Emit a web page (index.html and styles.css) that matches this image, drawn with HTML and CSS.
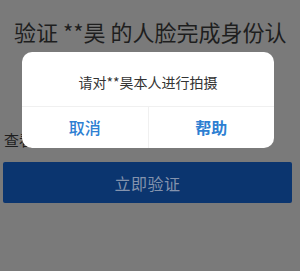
FILE: index.html
```html
<!DOCTYPE html>
<html lang="zh">
<head>
<meta charset="utf-8">
<link rel="stylesheet" href="styles.css">
</head>
<body>
<div class="page">
  <h1 class="title">验证 **昊 的人脸完成身份认</h1>
  <p class="link">查看相关协议</p>
  <button class="primary">立即验证</button>
</div>
<div class="mask">
  <div class="dialog">
    <div class="msg">请对**昊本人进行拍摄</div>
    <div class="actions">
      <div class="act">取消</div>
      <div class="act strong">帮助</div>
    </div>
  </div>
</div>
</body>
</html>
```

FILE: styles.css
```css
html, body {
  margin: 0;
  padding: 0;
  width: 300px;
  height: 271px;
  overflow: hidden;
  background: #7a7a7a;
  font-family: "Noto Sans CJK SC", "Noto Sans", sans-serif;
}
.page {
  display: flex;
  flex-direction: column;
  padding: 0 8px 0 3px;
}
.title {
  margin: 18px 0 0 11px;
  font-size: 22px;
  font-weight: 400;
  line-height: 26px;
  color: #1e1e1e;
  white-space: nowrap;
}
.link {
  margin: 88px 0 0 1px;
  font-size: 15px;
  line-height: 16px;
  color: #1e1e1e;
}
.primary {
  margin-top: 14px;
  height: 41px;
  border: none;
  border-radius: 2px;
  background: #0b356f;
  color: #8493ad;
  font-family: inherit;
  font-size: 16px;
  letter-spacing: 0.5px;
}
.mask {
  position: absolute;
  inset: 0;
}
.dialog {
  position: absolute;
  left: 22px;
  top: 52px;
  width: 252px;
  height: 96px;
  background: #fff;
  border-radius: 10px;
  display: flex;
  flex-direction: column;
}
.msg {
  height: 55px;
  display: flex;
  align-items: center;
  justify-content: center;
  font-size: 14px;
  color: #333;
  border-bottom: 1px solid #f0f0f0;
  box-sizing: border-box;
  padding-top: 5px;
}
.actions {
  flex: 1;
  display: flex;
}
.act {
  flex: 1;
  display: flex;
  align-items: center;
  justify-content: center;
  font-size: 16px;
  font-weight: 500;
  color: #2e7fd2;
  padding-bottom: 2px;
}
.act + .act {
  border-left: 1px solid #f0f0f0;
}
.strong {
  font-weight: 700;
}
```
